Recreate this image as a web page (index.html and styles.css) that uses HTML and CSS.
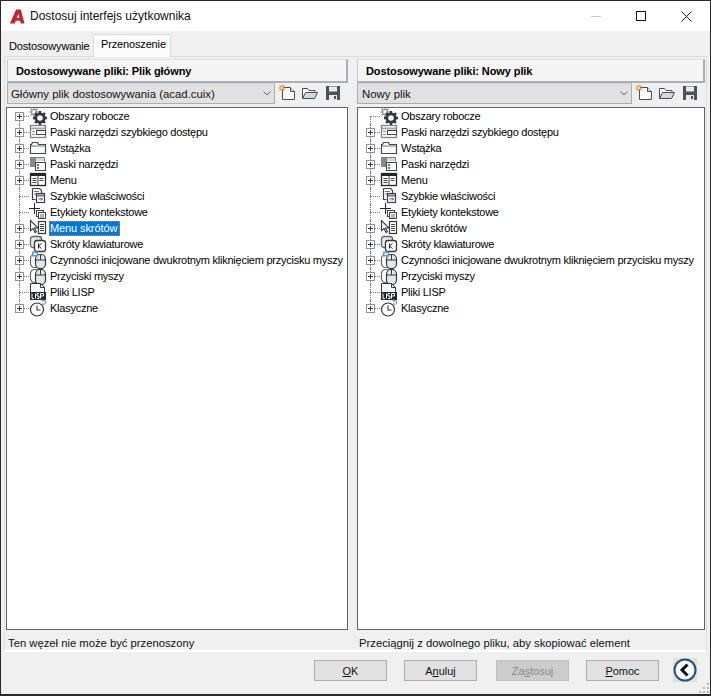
FILE: index.html
```html
<!DOCTYPE html>
<html lang="pl">
<head>
<meta charset="utf-8">
<title>Dostosuj interfejs użytkownika</title>
<link rel="stylesheet" href="styles.css">
</head>
<body>
<svg class="defs" width="0" height="0">
  <symbol id="i-gear" viewBox="0 0 18 18">
    <g fill="none" stroke="#8a8a8a" stroke-width="1.2"><circle cx="5" cy="5" r="2.500"/><path d="M5 0v2M5 8v2M0 5h2M8 5h2M1.500 1.500l1.400 1.400M7.100 7.100l1.400 1.400M8.500 1.500L7.100 2.900M2.900 7.100L1.500 8.500"/></g>
    <circle cx="11" cy="11" r="4.200" fill="#fff" stroke="#33383d" stroke-width="2.800"/>
    <path d="M11 4v3M11 15v3M4 11h3M15 11h3M6 6l2 2M14 14l2 2M16 6l-2 2M8 14l-2 2" stroke="#33383d" stroke-width="2.400"/>
  </symbol>
  <symbol id="i-qat" viewBox="0 0 18 18">
    <rect x="1.500" y="2.500" width="15" height="12" fill="#fff" stroke="#7e8287" stroke-width="1.300"/>
    <path d="M2 5.500h14" stroke="#a5a8ab" stroke-width="2"/>
    <rect x="7.500" y="7.500" width="9" height="4" fill="#fff" stroke="#3f4348"/>
    <path d="M3 8.500h3M3 11.500h3" stroke="#8c8f93"/>
  </symbol>
  <symbol id="i-ribbon" viewBox="0 0 18 18">
    <path d="M1.500 14.500v-9h1l1-2h5l1 2h7v9z" fill="#fff" stroke="#44484d" stroke-width="1.200"/>
    <path d="M2 7h14" stroke="#b4b7ba" stroke-width="2"/>
  </symbol>
  <symbol id="i-toolbars" viewBox="0 0 18 18">
    <path d="M1 2h6v10H1z" fill="#85888c"/>
    <path d="M1.500 2.500h14v4" fill="none" stroke="#7e8287"/>
    <path d="M7 3h8v3H7z" fill="#d4d6d8"/>
    <rect x="6.500" y="7.500" width="10" height="8" fill="#fff" stroke="#3f4348"/>
    <path d="M8 10h2M8 13h2" stroke="#3f4348" stroke-width="1.500"/>
  </symbol>
  <symbol id="i-menu" viewBox="0 0 18 18">
    <rect x="1.500" y="2.500" width="15" height="12" fill="#fff" stroke="#23272b" stroke-width="1.300"/>
    <path d="M2 4h14" stroke="#23272b" stroke-width="2"/>
    <path d="M9 5v9M3.500 7.500h4M3.500 9.500h4M3.500 11.500h4M10.500 7.500h4M10.500 9.500h4" stroke="#3f4348"/>
  </symbol>
  <symbol id="i-quick" viewBox="0 0 18 18">
    <path d="M3.500 1.500h7l2 2v3M3.500 1.500v11h3" fill="#fff" stroke="#3f4348" stroke-width="1.200"/>
    <path d="M5 4.500h5M5 7h3" stroke="#777"/>
    <rect x="7.500" y="6.500" width="8" height="9" fill="#fff" stroke="#3f4348" stroke-width="1.200"/>
    <path d="M8 8.500h7" stroke="#6d7984" stroke-width="2"/>
    <path d="M9.500 12h4M12 10.500l1.500 1.500-1.500 1.500" fill="none" stroke="#3f6689"/>
  </symbol>
  <symbol id="i-label" viewBox="0 0 18 18">
    <path d="M5.500 0v11M0 5.500h11" stroke="#23272b"/>
    <rect x="7.500" y="7.500" width="7" height="6" fill="#fff" stroke="#3f4348"/>
    <rect x="9.500" y="9.500" width="7" height="6" fill="#fff" stroke="#3f4348"/>
    <path d="M11 12h4M11 14h4" stroke="#666"/>
  </symbol>
  <symbol id="i-shortcut" viewBox="0 0 18 18">
    <path d="M1.500 1.500v10l2.500-2 2 4 1.500-.7-2-3.800h3.500z" fill="#fff" stroke="#33383d" stroke-width="1.100"/>
    <rect x="9.500" y="2.500" width="7" height="12" fill="#fff" stroke="#33383d" stroke-width="1.200"/>
    <path d="M11 5.500h4M11 7.500h4M11 9.500h4M11 11.500h4" stroke="#444"/>
  </symbol>
  <symbol id="i-keys" viewBox="0 0 18 18">
    <rect x="1.500" y="1.500" width="11" height="11" rx="2.500" fill="#e6e6e6" stroke="#666" stroke-width="1.300"/>
    <rect x="5.500" y="5.500" width="11" height="11" rx="2.500" fill="#fff" stroke="#33383d" stroke-width="1.300"/>
    <path d="M9.500 8.500v5M12.500 8.500l-3 2.500 3 2.500" fill="none" stroke="#23272b"/>
  </symbol>
  <symbol id="i-dbl" viewBox="0 0 18 18">
    <rect x="1.500" y="3.500" width="9" height="13" rx="4" fill="#fff" stroke="#666" stroke-width="1.200"/>
    <rect x="6.500" y="3.500" width="10" height="14" rx="4.500" fill="#e4e7ea" stroke="#33383d" stroke-width="1.200"/>
    <path d="M6.500 9h10M11.500 3.500V9" stroke="#33383d"/>
    <path d="M3 .500h6v5H3z" fill="#5b9bd5"/>
    <path d="M4.500 2h3v2h-3z" fill="#fff"/>
  </symbol>
  <symbol id="i-mouse" viewBox="0 0 18 18">
    <rect x="1.500" y="2.500" width="9" height="13" rx="4" fill="#fff" stroke="#666" stroke-width="1.200"/>
    <rect x="6.500" y="2.500" width="10" height="15" rx="4.500" fill="#e4e7ea" stroke="#33383d" stroke-width="1.200"/>
    <path d="M6.500 8h10M11.500 2.500V8" stroke="#33383d"/>
  </symbol>
  <symbol id="i-lisp" viewBox="0 0 18 18">
    <path d="M1.500.500h10l4 4v5" fill="#fff" stroke="#33383d"/>
    <path d="M1.500.500v9" stroke="#33383d"/>
    <path d="M11.500.500v4h4" fill="none" stroke="#33383d"/>
    <rect x="1" y="9" width="16" height="8" fill="#23272b"/>
    <path d="M3 10.500v5h2M6.500 10.500v5M8 15.500h2v-2.500h-2v-2.500h2M11.500 15.500v-5h3v2.500h-3" fill="none" stroke="#fff"/>
  </symbol>
  <symbol id="i-clock" viewBox="0 0 18 18">
    <circle cx="8" cy="10.500" r="6.500" fill="#fff" stroke="#33383d" stroke-width="1.200"/>
    <path d="M8 6.500v4.500h3.500" fill="none" stroke="#33383d" stroke-width="1.100"/>
    <path d="M13 4.500a2 2 0 1 0 1-3M14.500 0l-1.500 1.500 1.500 1.500" fill="none" stroke="#3b7cc4"/>
  </symbol>
  <symbol id="i-new" viewBox="0 0 18 18">
    <path d="M4.500 3.500h8l4 4v8h-12z" fill="#fff" stroke="#4a4e53"/>
    <path d="M12.500 3.500v4h4" fill="#e6e6e6" stroke="#4a4e53"/>
    <path d="M4 .500v7M.500 4h7M1.500 1.500l5 5M6.500 1.500l-5 5" stroke="#e2711d"/>
    <circle cx="4" cy="4" r="1.300" fill="#ffe97a"/>
  </symbol>
  <symbol id="i-open" viewBox="0 0 18 18">
    <path d="M1.500 14.500v-10h5l1.500 2h6v2" fill="#fff" stroke="#4a4e53"/>
    <path d="M1.500 14.500l3-6h12l-3 6z" fill="#d5d8da" stroke="#4a4e53"/>
  </symbol>
  <symbol id="i-save" viewBox="0 0 18 18">
    <path d="M2 2h14v14H2z" fill="#4c5258"/>
    <path d="M5 2.500h8v5H5z" fill="#e9ebec"/>
    <path d="M5 11h8v5H5z" fill="#e9ebec"/>
    <path d="M10 12h2v3h-2z" fill="#4c5258"/>
  </symbol>
</svg>

<div class="window">
  <header class="titlebar">
    <svg class="app-logo" viewBox="0 0 16 16"><path d="M0 15.500L6.500.500h5L15.500 15.500h-4l-.8-3H6.300l-1.300 3zM7.300 9.500h2.800L9 5z" fill="#c3242e" fill-rule="evenodd"/></svg>
    <span class="title">Dostosuj interfejs użytkownika</span>
    <div class="caption">
      <span class="cap cap-min"></span>
      <span class="cap cap-max"></span>
      <svg class="cap cap-close" viewBox="0 0 11 11"><path d="M.5.500l10 10M10.500.500l-10 10" stroke="#111" fill="none"/></svg>
    </div>
  </header>

  <nav class="tabs">
    <span class="tab">Dostosowywanie</span>
    <span class="tab tab-active">Przenoszenie</span>
  </nav>

  <main class="page">
    <section class="panel panel-left">
      <h2 class="panel-title">Dostosowywane pliki: Plik główny</h2>
      <div class="toolrow">
        <div class="combo"><span>Główny plik dostosowywania (acad.cuix)</span><svg class="chev" viewBox="0 0 8 5"><path d="M.5.500L4 4 7.500.500" fill="none" stroke="#666"/></svg></div>
        <div class="tools">
          <svg class="tool"><use href="#i-new"/></svg>
          <svg class="tool"><use href="#i-open"/></svg>
          <svg class="tool"><use href="#i-save"/></svg>
        </div>
      </div>
      <ul class="tree">
        <li class="row first"><span class="tw"><b class="plus"></b></span><svg class="ico"><use href="#i-gear"/></svg><span class="lbl">Obszary robocze</span></li>
        <li class="row"><span class="tw"><b class="plus"></b></span><svg class="ico"><use href="#i-qat"/></svg><span class="lbl">Paski narzędzi szybkiego dostępu</span></li>
        <li class="row"><span class="tw"><b class="plus"></b></span><svg class="ico"><use href="#i-ribbon"/></svg><span class="lbl">Wstążka</span></li>
        <li class="row"><span class="tw"><b class="plus"></b></span><svg class="ico"><use href="#i-toolbars"/></svg><span class="lbl">Paski narzędzi</span></li>
        <li class="row"><span class="tw"><b class="plus"></b></span><svg class="ico"><use href="#i-menu"/></svg><span class="lbl">Menu</span></li>
        <li class="row"><span class="tw"></span><svg class="ico"><use href="#i-quick"/></svg><span class="lbl">Szybkie właściwości</span></li>
        <li class="row"><span class="tw"></span><svg class="ico"><use href="#i-label"/></svg><span class="lbl">Etykiety kontekstowe</span></li>
        <li class="row"><span class="tw"><b class="plus"></b></span><svg class="ico"><use href="#i-shortcut"/></svg><span class="lbl selected">Menu skrótów</span></li>
        <li class="row"><span class="tw"><b class="plus"></b></span><svg class="ico"><use href="#i-keys"/></svg><span class="lbl">Skróty klawiaturowe</span></li>
        <li class="row"><span class="tw"><b class="plus"></b></span><svg class="ico"><use href="#i-dbl"/></svg><span class="lbl">Czynności inicjowane dwukrotnym kliknięciem przycisku myszy</span></li>
        <li class="row"><span class="tw"><b class="plus"></b></span><svg class="ico"><use href="#i-mouse"/></svg><span class="lbl">Przyciski myszy</span></li>
        <li class="row"><span class="tw"></span><svg class="ico"><use href="#i-lisp"/></svg><span class="lbl">Pliki LISP</span></li>
        <li class="row last"><span class="tw"><b class="plus"></b></span><svg class="ico"><use href="#i-clock"/></svg><span class="lbl">Klasyczne</span></li>
      </ul>
      <p class="status">Ten węzeł nie może być przenoszony</p>
    </section>

    <section class="panel panel-right">
      <h2 class="panel-title">Dostosowywane pliki: Nowy plik</h2>
      <div class="toolrow">
        <div class="combo"><span>Nowy plik</span><svg class="chev" viewBox="0 0 8 5"><path d="M.5.500L4 4 7.500.500" fill="none" stroke="#666"/></svg></div>
        <div class="tools">
          <svg class="tool"><use href="#i-new"/></svg>
          <svg class="tool"><use href="#i-open"/></svg>
          <svg class="tool"><use href="#i-save"/></svg>
        </div>
      </div>
      <ul class="tree">
        <li class="row first"><span class="tw"></span><svg class="ico"><use href="#i-gear"/></svg><span class="lbl">Obszary robocze</span></li>
        <li class="row"><span class="tw"><b class="plus"></b></span><svg class="ico"><use href="#i-qat"/></svg><span class="lbl">Paski narzędzi szybkiego dostępu</span></li>
        <li class="row"><span class="tw"><b class="plus"></b></span><svg class="ico"><use href="#i-ribbon"/></svg><span class="lbl">Wstążka</span></li>
        <li class="row"><span class="tw"><b class="plus"></b></span><svg class="ico"><use href="#i-toolbars"/></svg><span class="lbl">Paski narzędzi</span></li>
        <li class="row"><span class="tw"><b class="plus"></b></span><svg class="ico"><use href="#i-menu"/></svg><span class="lbl">Menu</span></li>
        <li class="row"><span class="tw"></span><svg class="ico"><use href="#i-quick"/></svg><span class="lbl">Szybkie właściwości</span></li>
        <li class="row"><span class="tw"></span><svg class="ico"><use href="#i-label"/></svg><span class="lbl">Etykiety kontekstowe</span></li>
        <li class="row"><span class="tw"><b class="plus"></b></span><svg class="ico"><use href="#i-shortcut"/></svg><span class="lbl">Menu skrótów</span></li>
        <li class="row"><span class="tw"><b class="plus"></b></span><svg class="ico"><use href="#i-keys"/></svg><span class="lbl">Skróty klawiaturowe</span></li>
        <li class="row"><span class="tw"><b class="plus"></b></span><svg class="ico"><use href="#i-dbl"/></svg><span class="lbl">Czynności inicjowane dwukrotnym kliknięciem przycisku myszy</span></li>
        <li class="row"><span class="tw"><b class="plus"></b></span><svg class="ico"><use href="#i-mouse"/></svg><span class="lbl">Przyciski myszy</span></li>
        <li class="row"><span class="tw"></span><svg class="ico"><use href="#i-lisp"/></svg><span class="lbl">Pliki LISP</span></li>
        <li class="row last"><span class="tw"><b class="plus"></b></span><svg class="ico"><use href="#i-clock"/></svg><span class="lbl">Klasyczne</span></li>
      </ul>
      <p class="status">Przeciągnij z dowolnego pliku, aby skopiować element</p>
    </section>
  </main>

  <footer class="footer">
    <button class="btn"><u>O</u>K</button>
    <button class="btn btn-wide-gap">A<u>n</u>uluj</button>
    <button class="btn btn-disabled">Za<u>s</u>tosuj</button>
    <button class="btn"><u>P</u>omoc</button>
    <svg class="back" viewBox="0 0 24 24">
      <rect width="24" height="24" fill="#e4e0d0"/>
      <circle cx="12" cy="12" r="10.500" fill="#fff" stroke="#1f4f86" stroke-width="2"/>
      <path d="M14.500 6.500L9 12l5.500 5.500" fill="none" stroke="#111" stroke-width="3"/>
    </svg>
    <svg class="grip" viewBox="0 0 10 10"><path d="M8 0h2v2H8zM8 4h2v2H8zM8 8h2v2H8zM4 4h2v2H4zM4 8h2v2H4zM0 8h2v2H0z" fill="#b8b8b8"/></svg>
  </footer>
</div>
</body>
</html>
```

FILE: styles.css
```css
* { box-sizing: border-box; }
html, body { margin: 0; padding: 0; }
body { font-family: "Liberation Sans", Arial, sans-serif; font-size: 11.4px; color: #000; background: #f0f0f0; }
.defs { position: absolute; }

.window {
  width: 711px; height: 696px; position: relative;
  border: 1px solid #2a2a2a; border-bottom-width: 2px;
  background: #f0f0f0; display: flex; flex-direction: column;
}

.titlebar { height: 30px; background: #fff; display: flex; align-items: center; padding-left: 9px; flex: none; }
.app-logo { width: 15px; height: 15px; margin-right: 5px; }
.title { font-size: 12px; color: #111; }
.caption { margin-left: auto; display: flex; align-items: center; height: 100%; }
.cap { display: block; }
.cap-min { width: 10px; height: 1px; background: #c9c9c9; margin-right: 35px; }
.cap-max { width: 10px; height: 10px; border: 1px solid #111; margin-right: 35px; }
.cap-close { width: 11px; height: 11px; margin-right: 18px; }

.tabs { height: 25px; display: flex; align-items: flex-end; padding-left: 4px; flex: none; position: relative; z-index: 1; font-size: 11px; letter-spacing: -.15px; }
.tab { width: 88px; height: 21px; padding: 5px 0 0 4px; }
.tab-active {
  width: 78px; height: 23px; background: #fbfbfb; border: 1px solid #dcdcdc; border-bottom: 0;
  margin-bottom: -1px; padding: 3px 0 0 7px;
}

.page {
  flex: none; height: 596px; margin: 0 3px;
  border: 1px solid #dedede; border-bottom: 2px solid #fff; border-top-color: #dcdcdc;
  display: grid; grid-template-columns: 342px 348px; column-gap: 9px; padding: 2px 1px 0 1px;
}

.panel { display: flex; flex-direction: column; min-width: 0; }
.panel-title {
  margin: 0 0 0 1px; height: 24px; font-size: 11px; font-weight: bold; color: #000; letter-spacing: -.1px;
  background: #f5f5f5; border: 2px solid #a9b0b5; border-top-color: #dfe2e4; border-left-color: #c9cdd0;
  border-top-width: 1px; border-left-width: 1px;
  padding: 4px 0 0 8px; line-height: 15px;
}
.panel-right .panel-title { margin-left: 0; }

.toolrow { display: flex; height: 21px; margin-left: 1px; }
.panel-right .toolrow { margin-left: 0; }
.combo {
  width: 268px; height: 21px; background: #e1e1e1; border: 1px solid #adadad; border-top-color: #d0d0d0;
  display: flex; align-items: center; padding: 0 3px; justify-content: space-between; color: #111;
}
.panel-right .combo { width: 275px; padding-left: 4px; }
.chev { width: 8px; height: 5px; }
.tools { display: flex; gap: 5px; padding: 1px 0 0 3px; }
.tool { width: 18px; height: 18px; }

.tree {
  list-style: none; margin: 3px 0 0 0; padding: 0; height: 523px; background: #fff;
  border: 1px solid #5e6266; overflow: hidden;
}
.row { height: 16px; display: flex; align-items: center; white-space: nowrap; }
.tw { width: 22px; height: 16px; position: relative; flex: none; }
.tw::before { content: ""; position: absolute; left: 12px; top: 8px; width: 10px; border-top: 1px dotted #777; }
.tw::after { content: ""; position: absolute; left: 12px; top: 0; height: 16px; border-left: 1px dotted #777; }
.first .tw::after { top: 8px; height: 8px; }
.last .tw::after { height: 8px; }
.plus {
  position: absolute; z-index: 1; left: 8px; top: 4px; width: 9px; height: 9px; background: #fff; border: 1px solid #8e9499;
}
.plus::before { content: ""; position: absolute; left: 1px; top: 3px; width: 5px; height: 1px; background: #1c3f6e; }
.plus::after { content: ""; position: absolute; left: 3px; top: 1px; width: 1px; height: 5px; background: #1c3f6e; }
.ico { width: 18px; height: 18px; flex: none; margin-right: 2px; overflow: visible; }
.lbl { padding: 0 1px; line-height: 15px; font-size: 11px; letter-spacing: -.25px; }
.selected { background: #0078d7; color: #fff; outline: 1px dotted #d9822b; outline-offset: -1px; padding-right: 3px; letter-spacing: -.1px; }

.status { margin: 0; padding: 6px 0 0 2px; line-height: 14px; color: #111; font-size: 11.25px; }

.footer { flex: 1; display: flex; align-items: flex-start; padding: 8px 0 0 313px; position: relative; }
.btn {
  width: 73px; height: 21px; padding: 0; margin-right: 17px; background: #e1e1e1; border: 1px solid #adadad;
  font: 11px "Liberation Sans", Arial, sans-serif; color: #111;
}
.btn-wide-gap { margin-right: 19px; }
.btn-disabled { background: #ccc; border-color: #bfbfbf; color: #8a8a8a; }
.back { width: 24px; height: 24px; margin: -2px 0 0 -3px; }
.grip { position: absolute; right: 1px; bottom: 1px; width: 10px; height: 10px; }
```
